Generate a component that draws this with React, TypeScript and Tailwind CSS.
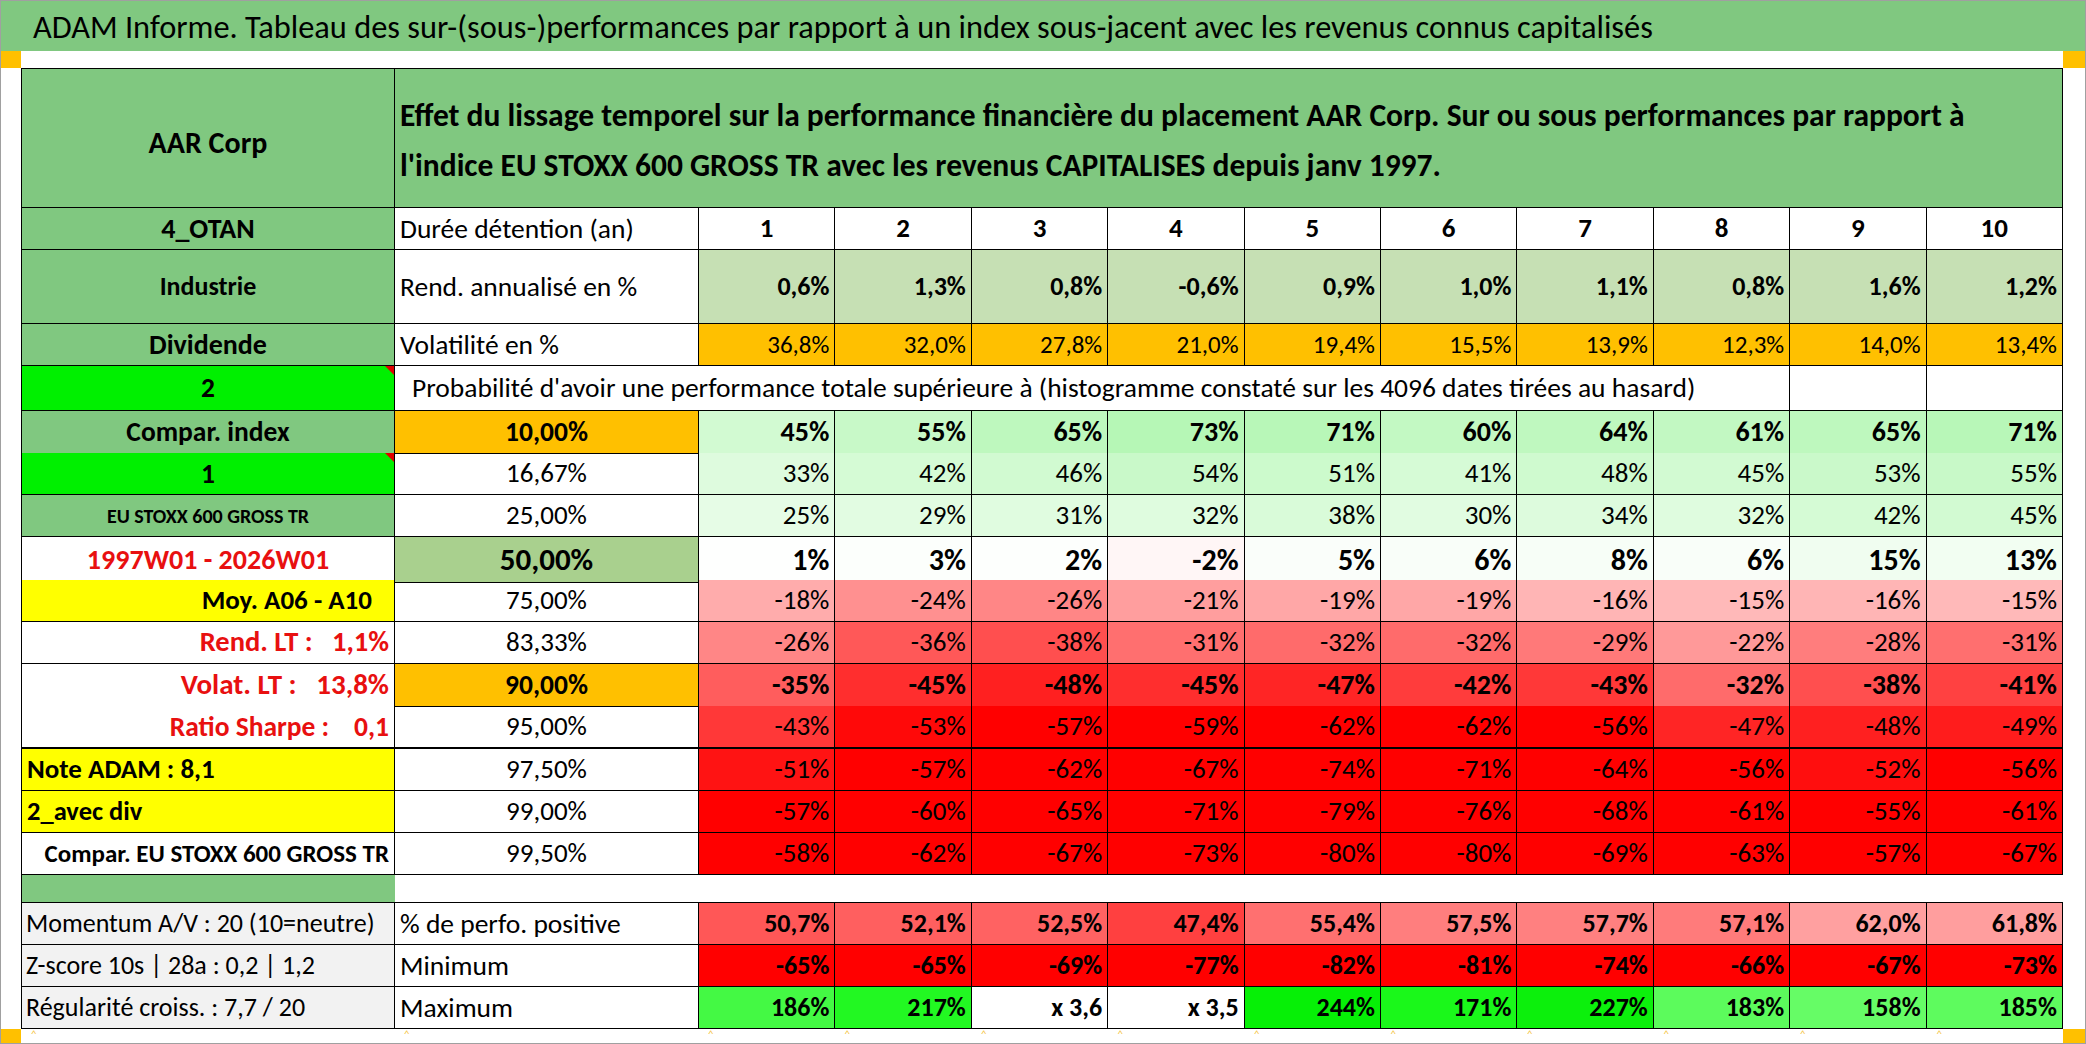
import clsx from "clsx";
import type { ReactNode } from "react";

const GRID = "grid grid-cols-[373px_304px_repeat(10,minmax(0,1fr))]";
const GREEN = "bg-[#80c880]";
const LIME = "bg-[#00f000]";
const ORANGE = "bg-[#ffc000]";
const YELLOW = "bg-[#ffff00]";
const RED_TXT = "text-[#e81010]";

function Cell({
  className,
  children,
  corner,
}: {
  className?: string;
  children?: ReactNode;
  corner?: boolean;
}) {
  return (
    <div
      className={clsx(
        "relative flex items-center border-r border-b border-black overflow-hidden whitespace-pre",
        className
      )}>
      {corner && (
        <span className="absolute top-0 right-0 border-t-[9px] border-l-[9px] border-t-[#e00000] border-l-transparent" />
      )}
      {children}
    </div>
  );
}

// colour scale of the probability block: white at 0, green above, red below
function scaleColor(v: number) {
  if (v >= 0) {
    const t = Math.min(1, v / 75);
    const rb = Math.round(255 - t * 75);
    const g = Math.round(255 - t * 8);
    return `rgb(${rb},${g},${rb})`;
  }
  const t = Math.min(1, -v / 55);
  const gb = Math.round(255 * (1 - t));
  return `rgb(255,${gb},${gb})`;
}

const years = [1, 2, 3, 4, 5, 6, 7, 8, 9, 10];
const rend = ["0,6%", "1,3%", "0,8%", "-0,6%", "0,9%", "1,0%", "1,1%", "0,8%", "1,6%", "1,2%"];
const vola = ["36,8%", "32,0%", "27,8%", "21,0%", "19,4%", "15,5%", "13,9%", "12,3%", "14,0%", "13,4%"];

type ProbRow = {
  a: string;
  aCls: string;
  corner?: boolean;
  b: string;
  bCls: string;
  vals: number[];
  vCls: string;
  h: string;
};

const probRows: ProbRow[] = [
  {
    a: "Compar. index",
    aCls: `${GREEN} justify-center font-bold text-[27.5px]`,
    b: "10,00%",
    bCls: `${ORANGE} font-bold text-[27.5px]`,
    vals: [45, 55, 65, 73, 71, 60, 64, 61, 65, 71],
    vCls: "font-bold text-[28px]",
    h: "h-[42px]",
  },
  {
    a: "1",
    aCls: `${LIME} justify-center font-bold text-[27.5px]`,
    corner: true,
    b: "16,67%",
    bCls: "text-[27px]",
    vals: [33, 42, 46, 54, 51, 41, 48, 45, 53, 55],
    vCls: "text-[27px]",
    h: "h-[42px]",
  },
  {
    a: "EU STOXX 600 GROSS TR",
    aCls: `${GREEN} justify-center font-bold text-[20px]`,
    b: "25,00%",
    bCls: "text-[27px]",
    vals: [25, 29, 31, 32, 38, 30, 34, 32, 42, 45],
    vCls: "text-[27px]",
    h: "h-[42px]",
  },
  {
    a: "1997W01 - 2026W01",
    aCls: `bg-white justify-center font-bold text-[28px] ${RED_TXT}`,
    b: "50,00%",
    bCls: "bg-[#a9d08e] font-bold text-[31px]",
    vals: [1, 3, 2, -2, 5, 6, 8, 6, 15, 13],
    vCls: "font-bold text-[30px]",
    h: "h-[43px]",
  },
  {
    a: "Moy. A06 - A10",
    aCls: `${YELLOW} justify-end pr-[22px] font-bold text-[27px]`,
    b: "75,00%",
    bCls: "text-[27px]",
    vals: [-18, -24, -26, -21, -19, -19, -16, -15, -16, -15],
    vCls: "text-[27px]",
    h: "h-[42px]",
  },
  {
    a: "Rend. LT :   1,1%",
    aCls: `bg-white justify-end pr-[5px] font-bold text-[28.5px] ${RED_TXT}`,
    b: "83,33%",
    bCls: "text-[27px]",
    vals: [-26, -36, -38, -31, -32, -32, -29, -22, -28, -31],
    vCls: "text-[27px]",
    h: "h-[42px]",
  },
  {
    a: "Volat. LT :   13,8%",
    aCls: `bg-white justify-end pr-[5px] font-bold text-[29px] ${RED_TXT}`,
    b: "90,00%",
    bCls: `${ORANGE} font-bold text-[27.5px]`,
    vals: [-35, -45, -48, -45, -47, -42, -43, -32, -38, -41],
    vCls: "font-bold text-[28px]",
    h: "h-[42px]",
  },
  {
    a: "Ratio Sharpe :    0,1",
    aCls: `bg-white justify-end pr-[5px] font-bold text-[27.5px] ${RED_TXT}`,
    b: "95,00%",
    bCls: "text-[27px]",
    vals: [-43, -53, -57, -59, -62, -62, -56, -47, -48, -49],
    vCls: "text-[27px]",
    h: "h-[43px] [&>div]:border-b-2",
  },
  {
    a: "Note ADAM : 8,1",
    aCls: `${YELLOW} justify-start pl-[5px] font-bold text-[27px]`,
    b: "97,50%",
    bCls: "text-[27px]",
    vals: [-51, -57, -62, -67, -74, -71, -64, -56, -52, -56],
    vCls: "text-[27px]",
    h: "h-[42px]",
  },
  {
    a: "2_avec div",
    aCls: `${YELLOW} justify-start pl-[5px] font-bold text-[26.5px]`,
    b: "99,00%",
    bCls: "text-[27px]",
    vals: [-57, -60, -65, -71, -79, -76, -68, -61, -55, -61],
    vCls: "text-[27px]",
    h: "h-[42px]",
  },
  {
    a: "Compar. EU STOXX 600 GROSS TR",
    aCls: "bg-white justify-end pr-[5px] font-bold text-[25px]",
    b: "99,50%",
    bCls: "text-[27px]",
    vals: [-58, -62, -67, -73, -80, -80, -69, -63, -57, -67],
    vCls: "text-[27px]",
    h: "h-[42px]",
  },
];

const perfo = [
  ["50,7%", "bg-[#ff5757]"],
  ["52,1%", "bg-[#ff5f5f]"],
  ["52,5%", "bg-[#ff6262]"],
  ["47,4%", "bg-[#ff4040]"],
  ["55,4%", "bg-[#ff7070]"],
  ["57,5%", "bg-[#ff7e7e]"],
  ["57,7%", "bg-[#ff8080]"],
  ["57,1%", "bg-[#ff7b7b]"],
  ["62,0%", "bg-[#ffa0a0]"],
  ["61,8%", "bg-[#ff9e9e]"],
];
const minimum = ["-65%", "-65%", "-69%", "-77%", "-82%", "-81%", "-74%", "-66%", "-67%", "-73%"];
const maximum = [
  ["186%", "bg-[#44f944]"],
  ["217%", "bg-[#22f822]"],
  ["x 3,6", "bg-white"],
  ["x 3,5", "bg-white"],
  ["244%", "bg-[#06f006]"],
  ["171%", "bg-[#1af81a]"],
  ["227%", "bg-[#0cf00c]"],
  ["183%", "bg-[#5cfb5c]"],
  ["158%", "bg-[#66fc66]"],
  ["185%", "bg-[#5efb5e]"],
];

export default function App() {
  return (
    <div className="w-[2086px] h-[1044px] border border-[#a0a0a0] bg-white flex flex-col overflow-hidden text-black font-['Carlito',Roboto,sans-serif]">
      {/* title band */}
      <div className={`h-[50px] shrink-0 ${GREEN} flex items-center pl-[32px] pt-[3px] text-[32.4px] whitespace-nowrap`}>
        ADAM Informe. Tableau des sur-(sous-)performances par rapport à un index sous-jacent avec les revenus connus capitalisés
      </div>
      <div className="h-[17px] shrink-0 flex justify-between">
        <div className={`w-[20px] ${ORANGE}`} />
        <div className={`w-[22px] ${ORANGE}`} />
      </div>

      <div className="flex shrink-0">
        <div className="w-[20px] shrink-0" />
        <div className="w-[2042px] shrink-0 border-l border-t border-black flex flex-col">
          {/* header */}
          <div className={`${GRID} h-[139px]`}>
            <Cell className={`${GREEN} justify-center pt-[8px] font-bold text-[30px]`}>AAR Corp</Cell>
            <Cell className={`${GREEN} col-span-11 pl-[5px] pt-[4px] font-bold text-[31.5px] leading-[50px] whitespace-normal`}>
              <div>
                Effet du lissage temporel sur la performance financière du placement AAR Corp. Sur ou sous performances par rapport à
                <br />
                l'indice EU STOXX 600 GROSS TR avec les revenus CAPITALISES depuis janv 1997.
              </div>
            </Cell>
          </div>

          <div className={`${GRID} h-[42px]`}>
            <Cell className={`${GREEN} justify-center font-bold text-[28px]`}>4_OTAN</Cell>
            <Cell className="pl-[5px] text-[27.5px]">Durée détention (an)</Cell>
            {years.map((y) => (
              <Cell key={y} className="justify-center font-bold text-[27px]">
                {y}
              </Cell>
            ))}
          </div>

          <div className={`${GRID} h-[74px]`}>
            <Cell className={`${GREEN} justify-center font-bold text-[26px]`}>Industrie</Cell>
            <Cell className="pl-[5px] text-[27.5px]">Rend. annualisé en %</Cell>
            {rend.map((v, i) => (
              <Cell key={i} className="bg-[#c6e0b4] justify-end pr-[5px] font-bold text-[26px]">
                {v}
              </Cell>
            ))}
          </div>

          <div className={`${GRID} h-[42px]`}>
            <Cell className={`${GREEN} justify-center font-bold text-[28px]`}>Dividende</Cell>
            <Cell className="pl-[5px] text-[27.5px]">Volatilité en %</Cell>
            {vola.map((v, i) => (
              <Cell key={i} className={`${ORANGE} justify-end pr-[5px] text-[25px]`}>
                {v}
              </Cell>
            ))}
          </div>

          <div className={`${GRID} h-[45px]`}>
            <Cell corner className={`${LIME} justify-center font-bold text-[27.5px]`}>2</Cell>
            <Cell className="col-span-9 pl-[17px] text-[27.5px]">
              Probabilité d'avoir une performance totale supérieure à (histogramme constaté sur les 4096 dates tirées au hasard)
            </Cell>
            <Cell />
            <Cell />
          </div>

          {probRows.map((r) => (
            <div key={r.b} className={`${GRID} ${r.h}`}>
              <Cell corner={r.corner} className={r.aCls}>
                {r.a}
              </Cell>
              <Cell className={clsx("justify-center", r.bCls)}>{r.b}</Cell>
              {r.vals.map((v, i) => (
                <div
                  key={i}
                  style={{ backgroundColor: scaleColor(v) }}
                  className={clsx(
                    "flex items-center justify-end pr-[5px] border-r border-b border-black",
                    r.vCls
                  )}>
                  {v}%
                </div>
              ))}
            </div>
          ))}

          {/* spacer */}
          <div className={`${GRID} h-[28px]`}>
            <div className={`${GREEN} border-b border-black`} />
            <div className="col-span-11 border-b border-black" />
          </div>

          <div className={`${GRID} h-[42px]`}>
            <Cell className="bg-[#f2f2f2] pl-[4px] text-[26px]">Momentum A/V : 20 (10=neutre)</Cell>
            <Cell className="pl-[5px] text-[27.5px]">% de perfo. positive</Cell>
            {perfo.map(([v, bg], i) => (
              <Cell key={i} className={`${bg} justify-end pr-[5px] font-bold text-[26px]`}>
                {v}
              </Cell>
            ))}
          </div>
          <div className={`${GRID} h-[42px]`}>
            <Cell className="bg-[#f2f2f2] pl-[4px] text-[26px]">Z-score 10s | 28a : 0,2 | 1,2</Cell>
            <Cell className="pl-[5px] text-[27.5px]">Minimum</Cell>
            {minimum.map((v, i) => (
              <Cell key={i} className="bg-[#ff0000] justify-end pr-[5px] font-bold text-[26px]">
                {v}
              </Cell>
            ))}
          </div>
          <div className={`${GRID} h-[42px]`}>
            <Cell className="bg-[#f2f2f2] pl-[4px] text-[26px]">Régularité croiss. : 7,7 / 20</Cell>
            <Cell className="pl-[5px] text-[27.5px]">Maximum</Cell>
            {maximum.map(([v, bg], i) => (
              <Cell key={i} className={`${bg} justify-end pr-[5px] font-bold text-[26px]`}>
                {v}
              </Cell>
            ))}
          </div>
        </div>
        <div className="flex-1" />
      </div>

      {/* bottom margin with the small marks under each column */}
      <div className="h-[14px] shrink-0 flex">
        <div className={`w-[20px] shrink-0 ${ORANGE}`} />
        <div className={`w-[2042px] shrink-0 ${GRID} text-[11px] leading-[10px] text-[#f5c542]`}>
          {Array.from({ length: 12 }, (_, i) => (
            <span key={i} className="pl-[10px]">
              ^
            </span>
          ))}
        </div>
        <div className={`flex-1 ${ORANGE}`} />
      </div>
    </div>
  );
}
